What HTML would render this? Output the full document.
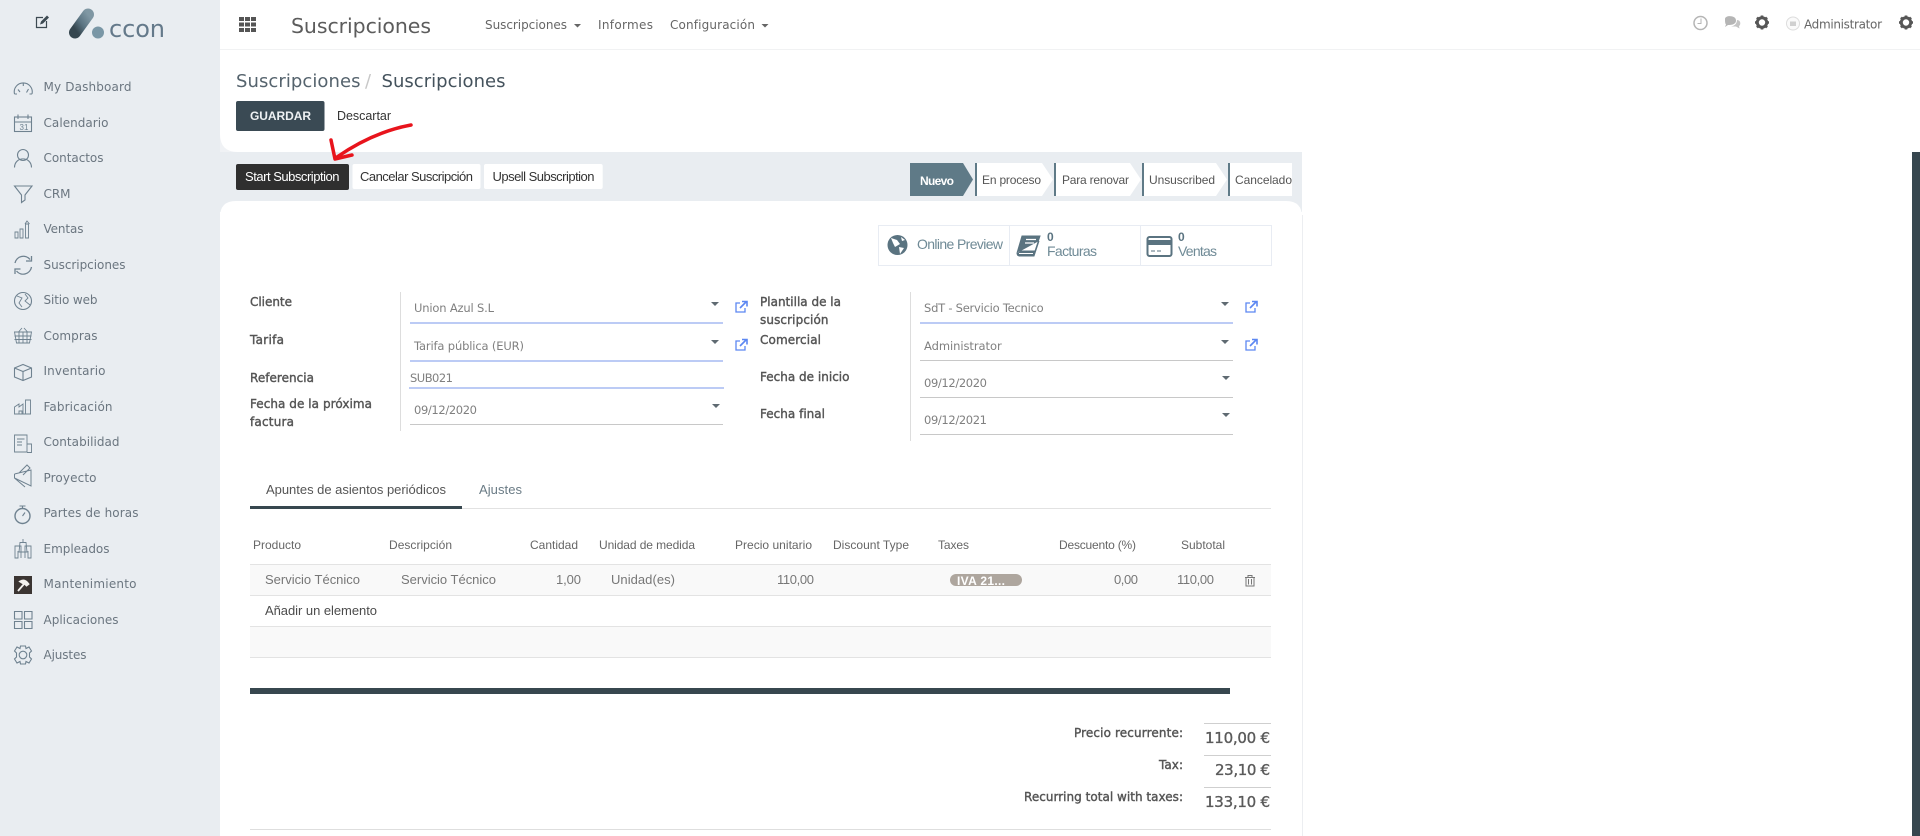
<!DOCTYPE html>
<html lang="es"><head><meta charset="utf-8"><title>Suscripciones</title>
<style>
html,body{margin:0;padding:0;background:#fff;width:1920px;height:836px;overflow:hidden}
svg{display:block}
text{white-space:pre}
.d{font-family:"DejaVu Sans",sans-serif}
.l{font-family:"Liberation Sans",sans-serif}
.nav{font-size:12px;fill:#6b7680}
.lab{font-size:12px;fill:#555;stroke:#555;stroke-width:.4}
.val{font-size:11.5px;fill:#808080}
.th{font-size:12px;fill:#666}
.td{font-size:13px;fill:#777}
.st{font-size:12px;fill:#555}
.ic{fill:none;stroke:#6f8290;stroke-width:1.1}
</style></head><body>
<svg width="1920" height="836" viewBox="0 0 1920 836" xmlns="http://www.w3.org/2000/svg">
<rect width="1920" height="836" fill="#fff"/>
<rect width="220" height="836" fill="#e9edf1"/>
<!-- main panels -->
<rect x="220" y="49" width="1082" height="155" fill="#f0f2f5"/>
<path d="M220 49H1302V152H238Q220 152 220 134Z" fill="#fff"/>
<rect x="220" y="152" width="1082" height="60" fill="#e9edf1"/>
<path d="M220 836V217Q220 201 236 201H1286Q1302 201 1302 217V836Z" fill="#fff"/>
<line x1="1302.5" y1="215" x2="1302.5" y2="836" stroke="#eceef1"/>
<rect x="220" y="49" width="1700" height="1" fill="#f1f2f3"/>
<rect x="1912" y="152" width="8" height="684" fill="#37474f"/>

<!-- logo -->
<g fill="none" stroke="#3d4a52" stroke-width="1.2"><path d="M43 17.5H36.500V27.500H46.500V21"/></g>
<path d="M40 24.500L41 21.500L47 15.500L49 17.500L43 23.500Z" fill="#3d4a52"/>
<defs><linearGradient id="g" x1="0" y1="1" x2="1" y2="0"><stop offset=".1" stop-color="#35464f"/><stop offset=".5" stop-color="#5b7482"/><stop offset="1" stop-color="#7f97a3"/></linearGradient></defs>
<path d="M75 32.5 L88 14.5" stroke="url(#g)" stroke-width="12" stroke-linecap="round" fill="none"/>
<circle cx="98" cy="32.5" r="6" fill="#7a97a6"/>
<text class="d" x="109" y="37" font-size="24" fill="#64798a" textLength="56">ccon</text>

<!-- sidebar text -->
<g class="d nav">
<text x="43.500" y="91" textLength="88">My Dashboard</text>
<text x="43.500" y="127" textLength="65">Calendario</text>
<text x="43.500" y="162" textLength="60">Contactos</text>
<text x="43.500" y="198" textLength="27">CRM</text>
<text x="43.500" y="233" textLength="40">Ventas</text>
<text x="43.500" y="269" textLength="82">Suscripciones</text>
<text x="43.500" y="304" textLength="54">Sitio web</text>
<text x="43.500" y="340" textLength="54">Compras</text>
<text x="43.500" y="375" textLength="62">Inventario</text>
<text x="43.500" y="411" textLength="69">Fabricación</text>
<text x="43.500" y="446" textLength="76">Contabilidad</text>
<text x="43.500" y="482" textLength="53">Proyecto</text>
<text x="43.500" y="517" textLength="95">Partes de horas</text>
<text x="43.500" y="553" textLength="66">Empleados</text>
<text x="43.500" y="588" textLength="93">Mantenimiento</text>
<text x="43.500" y="624" textLength="75">Aplicaciones</text>
<text x="43.500" y="659" textLength="43">Ajustes</text>
</g>

<!-- sidebar icons -->
<g class="ic">
<path d="M14.500 94A9 9 0 1 1 32 94M14.500 94H17M29.500 94H32M18 89.500L20 92M23.300 83V86M28.500 89L26.500 92.500"/>
<rect x="14.500" y="117" width="17" height="14.500"/><path d="M14.500 122H31.500M18 114.500V119M28 114.500V119"/>
<text class="l" x="19.500" y="130" font-size="8" fill="#6f8290" stroke="none">31</text>
<circle cx="23" cy="155" r="5.500"/><path d="M14.500 167.500C14.500 156 31.500 156 31.500 167.500"/>
<path d="M14.500 186H32L25 195V200L21.500 202.500V195Z"/>
<path d="M15 238V232H18V238ZM20 238V229H23V238ZM25.500 238V224H28.500V238ZM25 224L27 221L29.500 224" stroke-width=".9"/>
<path d="M15 263A8.500 8.500 0 0 1 30 259.500M31.500 267A8.500 8.500 0 0 1 16.500 271M31.500 256V261H26M15 274V269H20.500" stroke-width="1.300"/>
<circle cx="23" cy="301" r="8.500"/><path d="M17 296L22 298L19 303L22 307M25 294L28 298L25 301L30 305" stroke-width=".9"/>
<path d="M14.500 332H31.500L29.500 343H16.500ZM18.500 332L22 328M27.500 332L24 328M14.500 336H31.500M14.500 339.500H31.500M19 332V343M23 332V343M27 332V343" stroke-width=".9"/>
<path d="M14.500 368L23 364.500L31.500 368V377L23 380.500L14.500 377ZM14.500 368L23 371.500L31.500 368M23 371.500V380.500"/>
<path d="M14.500 414V407L19 404V407L23 404V414ZM25.500 414V400H30.500V414ZM14.500 414H31M19 414V411H22V414" stroke-width=".9"/>
<path d="M14.500 435H27V452H14.500ZM17 439H24.500M17 442H22M17 445H22M27 444H31.500V452.500H27" stroke-width=".9"/>
<path d="M14.500 474L31 470V486L14.500 478M14.500 474V478L25 487M19 473L27 465L30 468L23 475" stroke-width="1"/>
<circle cx="22.500" cy="516" r="7.500" stroke-width="1.400"/><path d="M19.500 506H25.500M22.500 506V508.500M22.500 516L25 512.500"/>
<path d="M18 551V558H15V546H21V558M28 551V558H31V546H25V558M20 542.500H26L27 552H19ZM23 539V542" stroke-width=".9"/>
<path d="M14.500 611.500h7.500v7.500h-7.500zM24.500 611.500h7.500v7.500h-7.500zM14.500 621.500h7.500v7h-7.500zM24.500 621.500h7.500v7h-7.500z"/>
<circle cx="23" cy="655" r="3.800"/><path d="M20.500 646H25.500L26 648.500L29 647L31.500 651L29.500 653V657L31.500 659L29 663L26 661.500L25.500 664H20.500L20 661.500L17 663L14.500 659L16.500 657V653L14.500 651L17 647L20 648.500Z"/>
</g>
<rect x="14" y="576" width="18" height="18" fill="#3b3532"/>
<path d="M18 591L24 584M20 581.500C23 579.500 26 580.500 28.500 584L26.500 585.500L24.500 583.500L22.500 583Z" stroke="#f4f2ef" stroke-width="1.800" fill="#f4f2ef"/>

<!-- top bar -->
<g fill="#555"><rect x="239" y="17" width="5" height="4"/><rect x="245" y="17" width="5" height="4"/><rect x="251" y="17" width="5" height="4"/><rect x="239" y="22.500" width="5" height="4"/><rect x="245" y="22.500" width="5" height="4"/><rect x="251" y="22.500" width="5" height="4"/><rect x="239" y="28" width="5" height="4"/><rect x="245" y="28" width="5" height="4"/><rect x="251" y="28" width="5" height="4"/></g>
<text class="d" x="291" y="33" font-size="20.500" fill="#5c5c5c" textLength="140">Suscripciones</text>
<g class="d" font-size="12" fill="#666">
<text x="485" y="29" textLength="82">Suscripciones</text><text x="598" y="29" textLength="55">Informes</text><text x="670" y="29" textLength="85">Configuración</text>
<text x="1804" y="28.500" textLength="78">Administrator</text></g>
<path d="M574 24H581L577.500 27.500ZM761.500 24H768.500L765 27.500Z" fill="#666"/>
<circle cx="1700.500" cy="23" r="6.500" fill="none" stroke="#b5b5b5" stroke-width="1.500"/><path d="M1701 18.500V23.500H1697.500" fill="none" stroke="#b5b5b5"/>
<path d="M1725 19C1725 15 1736 15 1736 20.500C1736 25 1730 25 1728 25L1725 27L1726 24.500C1725 23.500 1725 21 1725 19Z" fill="#b5b5b5"/>
<path d="M1737 20C1741 20 1741 25 1739 26L1739.500 28.500L1736 26.500H1731C1734 26 1737 24 1737 20Z" fill="#c4c4c4"/>
<g id="gear"><circle cx="1762" cy="22.500" r="4.700" fill="none" stroke="#565656" stroke-width="3"/><path d="M1762 15.500V17.500M1762 27.500V29.500M1755 22.500H1757M1767 22.500H1769M1757 17.500L1758.500 19M1765.500 26L1767 27.500M1767 17.500L1765.500 19M1758.500 26L1757 27.500" stroke="#565656" stroke-width="2.600"/></g>
<use href="#gear" x="144"/>
<circle cx="1793" cy="23.500" r="6.500" fill="#fafafa" stroke="#ddd"/><rect x="1790" y="21.500" width="6" height="4.500" fill="#d0d0d0"/>

<!-- breadcrumb -->
<g class="d" font-size="18" fill="#55636d">
<text x="236" y="87" textLength="124.500">Suscripciones</text><text x="365" y="87" fill="#c8c8c8">/</text><text x="381.500" y="87" textLength="124" fill="#44525c">Suscripciones</text></g>
<rect x="236" y="101" width="88.500" height="30" rx="2" fill="#3a4a54"/>
<text class="l" x="250" y="120" font-size="12" font-weight="700" fill="#eef1f3" textLength="61">GUARDAR</text>
<text class="l" x="337" y="120" font-size="12.500" fill="#333" textLength="54">Descartar</text>

<!-- action buttons -->
<rect x="236" y="164" width="113" height="26" rx="2" fill="#2f2f2f"/>
<rect x="352.500" y="164" width="128" height="25" rx="2" fill="#fff"/>
<rect x="484" y="164" width="118.700" height="25" rx="2" fill="#fff"/>
<g class="l" font-size="13">
<text x="245" y="181" fill="#fff" textLength="94.500">Start Subscription</text>
<text x="360" y="181" fill="#333" textLength="113">Cancelar Suscripción</text>
<text x="492.500" y="181" fill="#333" textLength="102">Upsell Subscription</text></g>

<!-- arrow -->
<path d="M411 125C384 130 360 141 337 157" fill="none" stroke="#e8141c" stroke-width="3.500" stroke-linecap="round"/>
<path d="M331 140L335 159L352 155" fill="none" stroke="#e8141c" stroke-width="3.500" stroke-linejoin="round" stroke-linecap="round"/>

<!-- statusbar -->
<path d="M910 163H963L973 179.500L963 196H910Z" fill="#5f7a87"/>
<g fill="#fff">
<path d="M977 163H1042L1053 179.500L1042 196H977Z"/><path d="M1056 163H1130L1141 179.500L1130 196H1056Z"/><path d="M1144 163H1216L1227 179.500L1216 196H1144Z"/><path d="M1230 163H1292V196H1230Z"/></g>
<g fill="#5f7a87"><rect x="975" y="163" width="2" height="33"/><rect x="1054" y="163" width="2" height="33"/><rect x="1142" y="163" width="2" height="33"/><rect x="1228" y="163" width="2" height="33"/></g>
<g class="l st">
<text x="920" y="185" font-weight="700" fill="#fff" stroke="none" textLength="34">Nuevo</text>
<text x="982" y="184" textLength="59">En proceso</text><text x="1062" y="184" textLength="67">Para renovar</text><text x="1149" y="184" textLength="66">Unsuscribed</text><text x="1235" y="184" textLength="57">Cancelado</text></g>

<!-- stat buttons -->
<rect x="878.500" y="225.500" width="393" height="40" fill="#fff" stroke="#e8ecf3"/>
<path d="M1009.500 226V265M1140.500 226V265" stroke="#e8ecf3"/>
<circle cx="897.500" cy="245" r="10" fill="#5a7380"/>
<path d="M891 238L897 240L900 244L895 247L893 243ZM899 247L904 248L900 254ZM901 237L905 240L902 241Z" fill="#fff"/>
<text class="l" x="917" y="249" font-size="14" fill="#6f8a96" textLength="86">Online Preview</text>
<path d="M1022 236H1040L1035 251H1021C1018 251 1017 252 1017 253ZM1017 253C1017 256 1019 256 1021 256H1034L1039 241" fill="#5a7380" stroke="#5a7380"/><path d="M1019 253.500H1033" stroke="#fff"/><path d="M1026 239.500H1036M1025 243H1034" stroke="#fff" stroke-width="1.300"/>
<rect x="1147.500" y="237" width="24" height="19" rx="2" fill="#fff" stroke="#5a7380" stroke-width="2"/><rect x="1147.500" y="240" width="24" height="5" fill="#5a7380"/><path d="M1151 251H1155M1157 251H1161" stroke="#5a7380"/>
<g class="l" fill="#5a7380">
<text x="1047" y="241" font-size="12" font-weight="700">0</text><text x="1047" y="256" font-size="14" fill="#6f8a96" textLength="50">Facturas</text>
<text x="1178" y="241" font-size="12" font-weight="700">0</text><text x="1178" y="256" font-size="14" fill="#6f8a96" textLength="39">Ventas</text></g>

<!-- form labels -->
<g class="d lab">
<text x="250" y="306" textLength="42">Cliente</text><text x="250" y="344" textLength="34">Tarifa</text><text x="250" y="382" textLength="64">Referencia</text><text x="250" y="408" textLength="122">Fecha de la próxima</text><text x="250" y="426" textLength="44">factura</text>
<text x="760" y="306" textLength="81">Plantilla de la</text><text x="760" y="324" textLength="68.500">suscripción</text><text x="760" y="344" textLength="61">Comercial</text><text x="760" y="381" textLength="89.500">Fecha de inicio</text><text x="760" y="418" textLength="65">Fecha final</text></g>
<path d="M400.500 292V431M910.500 292V441" stroke="#ddd"/>
<g class="d val">
<text x="414" y="312" textLength="80">Union Azul S.L</text><text x="414" y="350" textLength="110">Tarifa pública (EUR)</text><text x="410" y="382" textLength="43">SUB021</text><text x="414" y="414" textLength="63">09/12/2020</text>
<text x="924" y="312" textLength="119.700">SdT - Servicio Tecnico</text><text x="924" y="350" textLength="77.700">Administrator</text><text x="924" y="387" textLength="63">09/12/2020</text><text x="924" y="424" textLength="63">09/12/2021</text></g>
<g fill="#bccbf5"><rect x="410" y="322" width="313" height="2"/><rect x="410" y="360" width="313" height="2"/><rect x="409" y="387" width="315" height="2"/><rect x="920" y="322" width="313" height="2"/></g>
<g fill="#c8c8c8"><rect x="410" y="424" width="313" height="1"/><rect x="920" y="360" width="313" height="1"/><rect x="920" y="397" width="313" height="1"/><rect x="920" y="434" width="313" height="1"/></g>
<g fill="#5f6a72">
<path d="M711 302H719L715 306ZM711 340H719L715 344ZM712 404H720L716 408ZM1221 302H1229L1225 306ZM1221 340H1229L1225 344ZM1222 376H1230L1226 380ZM1222 413H1230L1226 417Z"/></g>
<g id="ext" fill="none" stroke="#5c87f2" stroke-width="1.300"><path d="M740 303H736V312H745V308"/><path d="M740 308L746 302M742 301.500H747V306.500" stroke-width="1.600"/></g>
<use href="#ext" y="38"/><use href="#ext" x="510"/><use href="#ext" x="510" y="38"/>

<!-- tabs -->
<rect x="250" y="508" width="1021" height="1" fill="#e2e2e2"/>
<rect x="250" y="506" width="212" height="3" fill="#37474f"/>
<g class="l" font-size="13" fill="#555"><text x="266" y="494" textLength="180">Apuntes de asientos periódicos</text><text x="479" y="494" fill="#6a7b85" textLength="43">Ajustes</text></g>

<!-- table -->
<rect x="250" y="565" width="1021" height="30" fill="#f9f9f9"/><rect x="250" y="627" width="1021" height="30" fill="#f9f9f9"/>
<g fill="#e3e3e3"><rect x="250" y="564" width="1021" height="1"/><rect x="250" y="595" width="1021" height="1"/><rect x="250" y="626" width="1021" height="1"/><rect x="250" y="657" width="1021" height="1"/></g>
<g class="l th">
<text x="253" y="549" textLength="48">Producto</text><text x="389" y="549" textLength="63">Descripción</text><text x="530" y="549" textLength="48">Cantidad</text><text x="599" y="549" textLength="96">Unidad de medida</text><text x="735" y="549" textLength="77">Precio unitario</text><text x="833" y="549" textLength="76">Discount Type</text><text x="938" y="549" textLength="31">Taxes</text><text x="1059" y="549" textLength="77">Descuento (%)</text><text x="1181" y="549" textLength="44">Subtotal</text></g>
<g class="l td">
<text x="265" y="584" textLength="95">Servicio Técnico</text><text x="401" y="584" textLength="95">Servicio Técnico</text><text x="556" y="584" textLength="25">1,00</text><text x="611" y="584" textLength="64">Unidad(es)</text><text x="777" y="584" textLength="37">110,00</text><text x="1114" y="584" textLength="24">0,00</text><text x="1177" y="584" textLength="37">110,00</text></g>
<rect x="950" y="574" width="72" height="12" rx="6" fill="#aea69e"/>
<text class="l" x="957" y="585" font-size="12" font-weight="700" fill="#fff" textLength="48">IVA 21...</text>
<path d="M1246 577.500V586H1254V577.500M1245 577.500H1255M1248 577V575.500H1252V577M1248.500 579V584.500M1251.500 579V584.500" fill="none" stroke="#777" stroke-width="1"/>
<text class="l" x="265" y="615" font-size="13" fill="#4c4c4c" textLength="112">Añadir un elemento</text>
<rect x="250" y="688" width="980" height="6" fill="#37474f"/>

<!-- totals -->
<g fill="#cfcfcf"><rect x="1204" y="723" width="67" height="1"/><rect x="1204" y="755" width="67" height="1"/><rect x="1204" y="787" width="67" height="1"/></g>
<rect x="250" y="829" width="1021" height="1" fill="#dedede"/>
<g class="d lab"><text x="1074" y="737" textLength="109">Precio recurrente:</text><text x="1159" y="769" textLength="24">Tax:</text><text x="1024" y="801" textLength="159">Recurring total with taxes:</text></g>
<g class="d" font-size="15" fill="#5a5a5a" stroke="#5a5a5a" stroke-width=".35"><text x="1205" y="743" textLength="65">110,00 €</text><text x="1215" y="775" textLength="55">23,10 €</text><text x="1205" y="807" textLength="65">133,10 €</text></g>
</svg>
</body></html>
